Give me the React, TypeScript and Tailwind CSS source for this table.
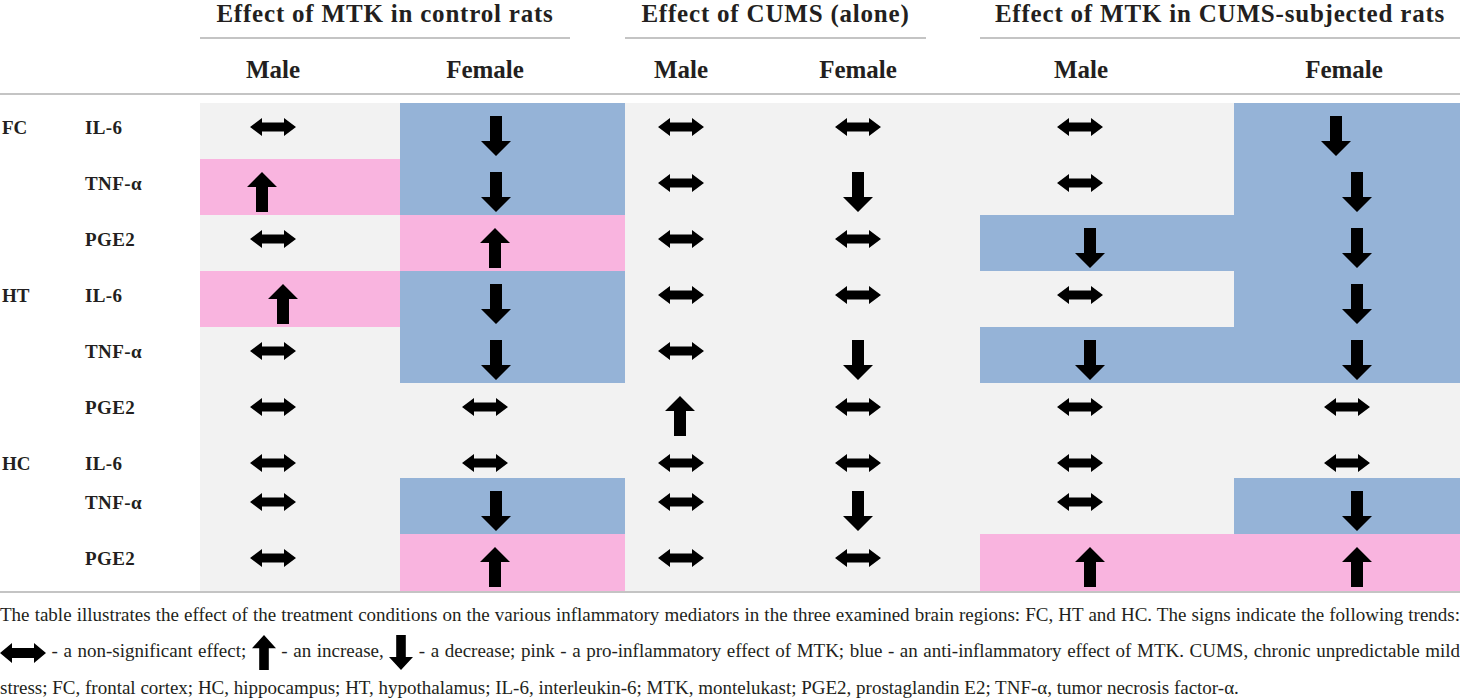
const GREY = "bg-[#f2f2f2]";
const BLUE = "bg-[#95b3d7]";
const PINK = "bg-[#f9b4df]";

type Kind = "lr" | "up" | "down";
type Cell = [Kind, string, string?];

const colWidths = ["w-[200px]", "w-[225px]", "w-[165px]", "w-[190px]", "w-[254px]", "w-[226px]"];

// left offset of the arrow inside each column
const offsets: Record<Kind, string[]> = {
  lr: ["ml-[50px]", "ml-[62px]", "ml-[33px]", "ml-[45px]", "ml-[77px]", "ml-[90px]"],
  down: ["ml-[50px]", "ml-[81px]", "ml-[40px]", "ml-[53px]", "ml-[95px]", "ml-[108px]"],
  up: ["ml-[47px]", "ml-[80px]", "ml-[40px]", "ml-[53px]", "ml-[95px]", "ml-[108px]"],
};

const rows: { region?: string; name: string; h: string; cells: Cell[] }[] = [
  {
    region: "FC",
    name: "IL-6",
    h: "h-[56px]",
    cells: [["lr", GREY], ["down", BLUE], ["lr", GREY], ["lr", GREY], ["lr", GREY], ["down", BLUE, "ml-[87px]"]],
  },
  {
    name: "TNF-α",
    h: "h-[56px]",
    cells: [["up", PINK], ["down", BLUE], ["lr", GREY], ["down", GREY], ["lr", GREY], ["down", BLUE]],
  },
  {
    name: "PGE2",
    h: "h-[56px]",
    cells: [["lr", GREY], ["up", PINK], ["lr", GREY], ["lr", GREY], ["down", BLUE], ["down", BLUE]],
  },
  {
    region: "HT",
    name: "IL-6",
    h: "h-[56px]",
    cells: [["up", PINK, "ml-[68px]"], ["down", BLUE], ["lr", GREY], ["lr", GREY], ["lr", GREY], ["down", BLUE]],
  },
  {
    name: "TNF-α",
    h: "h-[56px]",
    cells: [["lr", GREY], ["down", BLUE], ["lr", GREY], ["down", GREY], ["down", BLUE], ["down", BLUE]],
  },
  {
    name: "PGE2",
    h: "h-[56px]",
    cells: [["lr", GREY], ["lr", GREY], ["up", GREY], ["lr", GREY], ["lr", GREY], ["lr", GREY]],
  },
  {
    region: "HC",
    name: "IL-6",
    h: "h-[39px]",
    cells: [["lr", GREY], ["lr", GREY], ["lr", GREY], ["lr", GREY], ["lr", GREY], ["lr", GREY]],
  },
  {
    name: "TNF-α",
    h: "h-[56px]",
    cells: [["lr", GREY], ["down", BLUE], ["lr", GREY], ["down", GREY], ["lr", GREY], ["down", BLUE]],
  },
  {
    name: "PGE2",
    h: "h-[57px]",
    cells: [["lr", GREY], ["up", PINK], ["lr", GREY], ["lr", GREY], ["up", PINK], ["up", PINK]],
  },
];

function Both({ className = "w-[46px] h-[18px]" }: { className?: string }) {
  return (
    <svg viewBox="0 0 46 18" preserveAspectRatio="none" className={className}>
      <path d="M0 9 L12 0 L12 4.5 L34 4.5 L34 0 L46 9 L34 18 L34 13.5 L12 13.5 L12 18 Z" fill="#000" />
    </svg>
  );
}

function Down({ className = "w-[30px] h-[40px]" }: { className?: string }) {
  return (
    <svg viewBox="0 0 30 40" preserveAspectRatio="none" className={className}>
      <path d="M9 0 L21 0 L21 25 L30 25 L15 40 L0 25 L9 25 Z" fill="#000" />
    </svg>
  );
}

function Up({ className = "w-[30px] h-[40px]" }: { className?: string }) {
  return (
    <svg viewBox="0 0 30 40" preserveAspectRatio="none" className={className}>
      <path d="M15 0 L30 15 L21 15 L21 40 L9 40 L9 15 L0 15 Z" fill="#000" />
    </svg>
  );
}

function Arrow({ kind }: { kind: Kind }) {
  if (kind === "lr") return <Both />;
  if (kind === "up") return <Up />;
  return <Down />;
}

const groups = [
  { title: "Effect of MTK in control rats", w: "w-[370px]" },
  { title: "Effect of CUMS (alone)", w: "w-[301px]" },
  { title: "Effect of MTK in CUMS-subjected rats", w: "w-[480px]" },
];

const sexes = [
  { label: "Male", ml: "ml-[23px]" },
  { label: "Female", ml: "ml-[35px]" },
  { label: "Male", ml: "ml-[6px]" },
  { label: "Female", ml: "ml-[18px]" },
  { label: "Male", ml: "ml-[51px]" },
  { label: "Female", ml: "ml-[60px]" },
];

export default function App() {
  return (
    <div className="w-[1460px] h-[698px] overflow-hidden bg-white text-[#231f20] font-['Liberation_Serif',serif]">
      {/* group titles */}
      <div className="flex">
        <div className="w-[200px] shrink-0" />
        {groups.map((g, i) => (
          <div key={i} className={`${g.w} shrink-0 ${i === 1 ? "ml-[55px]" : i === 2 ? "ml-[54px]" : ""}`}>
            <div className="text-center text-[25px] leading-[28px] tracking-[0.8px] font-bold whitespace-nowrap">
              {g.title}
            </div>
            <div className="mt-[9px] h-[2px] bg-[#c4c4c4]" />
          </div>
        ))}
      </div>

      {/* Male / Female */}
      <div className="flex mt-[19px]">
        <div className="w-[200px] shrink-0" />
        {sexes.map((s, i) => (
          <div key={i} className={`${colWidths[i]} shrink-0`}>
            <div className={`${s.ml} w-[100px] text-center text-[25px] leading-[24px] font-bold`}>{s.label}</div>
          </div>
        ))}
      </div>
      <div className="mt-[11px] h-[2px] bg-[#c4c4c4]" />

      {/* body */}
      <div className="mt-[8px] flex flex-col">
        {rows.map((r, ri) => (
          <div key={ri} className={`flex ${r.h}`}>
            <div className="w-[85px] shrink-0 pl-[2px] pt-[16px] text-[19px] leading-[18px] font-bold">{r.region}</div>
            <div className="w-[115px] shrink-0 pt-[16px] text-[19px] leading-[18px] tracking-[0.4px] font-bold">
              {r.name}
            </div>
            {r.cells.map(([kind, bg, ml], ci) => (
              <div key={ci} className={`${colWidths[ci]} shrink-0 ${bg} flex`}>
                <div className={`${ml ?? offsets[kind][ci]} ${kind === "lr" ? "pt-[15px]" : "pt-[13px]"}`}>
                  <Arrow kind={kind} />
                </div>
              </div>
            ))}
          </div>
        ))}
      </div>
      <div className="h-[2px] bg-[#c4c4c4]" />

      {/* caption */}
      <div className="mt-[4px] text-[19px] leading-[36px] text-[#231f20]">
        <p className="text-justify [text-align-last:justify] whitespace-nowrap">
          The table illustrates the effect of the treatment conditions on the various inflammatory mediators in the three examined brain regions: FC, HT and HC. The signs indicate the following trends:
        </p>
        <p className="text-justify [text-align-last:justify] whitespace-nowrap">
          <span className="inline-block align-middle">
            <Both className="w-[46px] h-[20px]" />
          </span>{" "}
          - a non-significant effect;{" "}
          <span className="inline-block align-middle">
            <Up className="w-[24px] h-[35px]" />
          </span>{" "}
          - an increase,{" "}
          <span className="inline-block align-middle">
            <Down className="w-[24px] h-[35px]" />
          </span>{" "}
          - a decrease; pink - a pro-inflammatory effect of MTK; blue - an anti-inflammatory effect of MTK. CUMS, chronic unpredictable mild
        </p>
        <p className="whitespace-nowrap">
          stress; FC, frontal cortex; HC, hippocampus; HT, hypothalamus; IL-6, interleukin-6; MTK, montelukast; PGE2, prostaglandin E2; TNF-α, tumor necrosis factor-α.
        </p>
      </div>
    </div>
  );
}
